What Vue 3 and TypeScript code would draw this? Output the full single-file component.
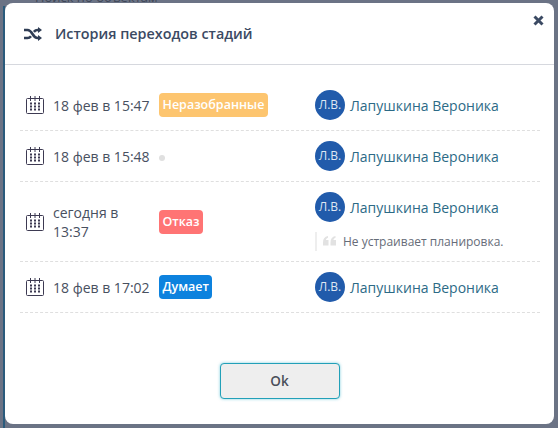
<script setup lang="ts">
interface Row { date: string; badge?: string; color?: string; quote?: string }
const rows: Row[] = [
  { date: '18 фев в 15:47', badge: 'Неразобранные', color: '#fdc56f' },
  { date: '18 фев в 15:48' },
  { date: 'сегодня в 13:37', badge: 'Отказ', color: '#ff7474', quote: 'Не устраивает планировка.' },
  { date: '18 фев в 17:02', badge: 'Думает', color: '#0d82de' },
]
</script>

<template>
  <div class="page">
    <div class="peek">Поиск по объектам</div>
    <div class="stripe"></div>
    <div class="modal">
      <button class="close" aria-label="Закрыть">
        <svg width="11" height="11" viewBox="0 0 11 11"><path d="M1.500 1.500l8 8M9.500 1.500l-8 8" stroke="#3b4a63" stroke-width="3" fill="none" /></svg>
      </button>
      <header class="head">
        <svg class="shuffle" width="18" height="14" viewBox="0 0 18 14" fill="none" stroke="#2f3d55" stroke-width="2.600">
          <path d="M0 3h3.500c2.500 0 3.500 1.500 5 4s2.500 4 5 4H15" />
          <path d="M0 11h3.500c1.600 0 2.600-.7 3.500-1.800M9.900 4.900C10.900 3.700 11.900 3 13.500 3H15" />
          <path d="M14 0l4 3-4 3zM14 8l4 3-4 3z" fill="#2f3d55" stroke="none" />
        </svg>
        <h1>История переходов стадий</h1>
      </header>
      <div class="list">
        <div v-for="(r, i) in rows" :key="i" class="row">
          <div class="when">
            <svg class="cal" width="18" height="18" viewBox="0 0 18 18" fill="none" stroke="#3d3a52">
              <rect x="0.500" y="2.500" width="17" height="15" rx="1" />
              <path d="M4.500 0v5M9 0v5M13.500 0v5" />
              <path d="M4 7.500h2M8 7.500h2M12 7.500h2M4 10.500h2M8 10.500h2M12 10.500h2M4 13.500h2M8 13.500h2M12 13.500h2" stroke-width="2" />
            </svg>
            <span class="date">{{ r.date }}</span>
          </div>
          <div class="stage">
            <span v-if="r.badge" class="badge" :style="{ background: r.color }">{{ r.badge }}</span>
            <span v-else class="dot"></span>
          </div>
          <div class="who">
            <div class="person">
              <span class="avatar">Л.В.</span>
              <span class="name">Лапушкина Вероника</span>
            </div>
            <div v-if="r.quote" class="quote">
              <svg class="mark" width="13" height="10" viewBox="0 0 13 10" fill="#e2e2e2">
                <path d="M0 6.500C0 3 1.500 .8 5 0v1.800C3.600 2.300 3 3 3 4h2.500v5.500H0zM7.500 6.500C7.500 3 9 .8 12.500 0v1.800C11.100 2.300 10.500 3 10.500 4H13v5.500H7.500z" />
              </svg>
              <span>{{ r.quote }}</span>
            </div>
          </div>
        </div>
      </div>
      <footer class="foot">
        <button class="ok">Ok</button>
      </footer>
    </div>
  </div>
</template>

<style>
html, body { margin: 0; background: #6b7385; overflow: hidden; }
</style>

<style scoped>
.page {
  position: relative;
  width: 558px;
  height: 428px;
  box-sizing: border-box;
  padding: 3px 4px 4px 5px;
  background: #6b7385;
  overflow: hidden;
  font-family: "Open Sans", "Noto Sans", sans-serif;
}
.peek {
  position: absolute;
  left: 35px;
  top: -12px;
  font-size: 13px;
  color: #3e4656;
}
.stripe {
  position: absolute;
  left: 3px;
  top: 6px;
  bottom: 0;
  width: 2px;
  background: #2a5b7c;
}
.modal {
  position: relative;
  height: 421px;
  background: #fff;
  border-radius: 8px;
  display: flex;
  flex-direction: column;
}
.close {
  position: absolute;
  top: 12px;
  right: 10px;
  width: 11px;
  height: 11px;
  padding: 0;
  border: 0;
  background: none;
  display: flex;
}
.head {
  height: 62px;
  flex: none;
  box-sizing: border-box;
  border-bottom: 1px solid #d6d8de;
  display: flex;
  align-items: center;
  padding: 0 0 0 19px;
  gap: 13px;
}
.shuffle { flex: none; margin-top: 1px; }
h1 {
  margin: 0;
  font-size: 14.350px;
  font-weight: 600;
  color: #3b4a63;
}
.list { padding: 15px 14px 0 15px; }
.row {
  display: flex;
  align-items: center;
  min-height: 51px;
  box-sizing: border-box;
  border-bottom: 1px dashed #dfdfdf;
  padding: 7px 0;
}
.row:nth-child(3) { min-height: 80px; }
.when {
  width: 139px;
  flex: none;
  display: flex;
  align-items: center;
  padding-left: 6px;
  box-sizing: border-box;
  gap: 9px;
}
.cal { flex: none; }
.date {
  width: 100px;
  font-size: 14px;
  line-height: 19px;
  color: #48505f;
}
.stage {
  width: 156px;
  flex: none;
  display: flex;
  align-items: center;
}
.badge {
  font-size: 12.500px;
  font-weight: 600;
  line-height: 24px;
  padding: 0 3.500px;
  border-radius: 4px;
  color: #fff;
}
.dot {
  width: 6px;
  height: 6px;
  margin-top: 3px;
  border-radius: 50%;
  background: #e0e0e0;
}
.person { display: flex; align-items: center; gap: 5px; }
.avatar {
  width: 30px;
  height: 30px;
  border-radius: 50%;
  background: #215bab;
  color: #dfe7f3;
  font-size: 12px;
  line-height: 30px;
  text-align: center;
}
.name { font-size: 14px; color: #2c6a86; }
.quote {
  display: flex;
  align-items: center;
  margin-top: 10px;
  height: 19px;
  border-left: 2px solid #eee;
  padding-left: 6px;
  font-size: 12px;
  color: #666c78;
  gap: 7px;
}
.mark { flex: none; margin-top: -1px; }
.foot {
  margin-top: auto;
  padding-bottom: 25px;
  display: flex;
  justify-content: center;
}
.ok {
  width: 120px;
  height: 36px;
  box-sizing: border-box;
  border: 1px solid #22a0b8;
  border-radius: 4px;
  background: #eee;
  box-shadow: 0 0 3px rgba(34, 170, 200, 0.600);
  font-family: inherit;
  font-size: 13.500px;
  font-weight: 600;
  color: #4a4f5a;
}
</style>
